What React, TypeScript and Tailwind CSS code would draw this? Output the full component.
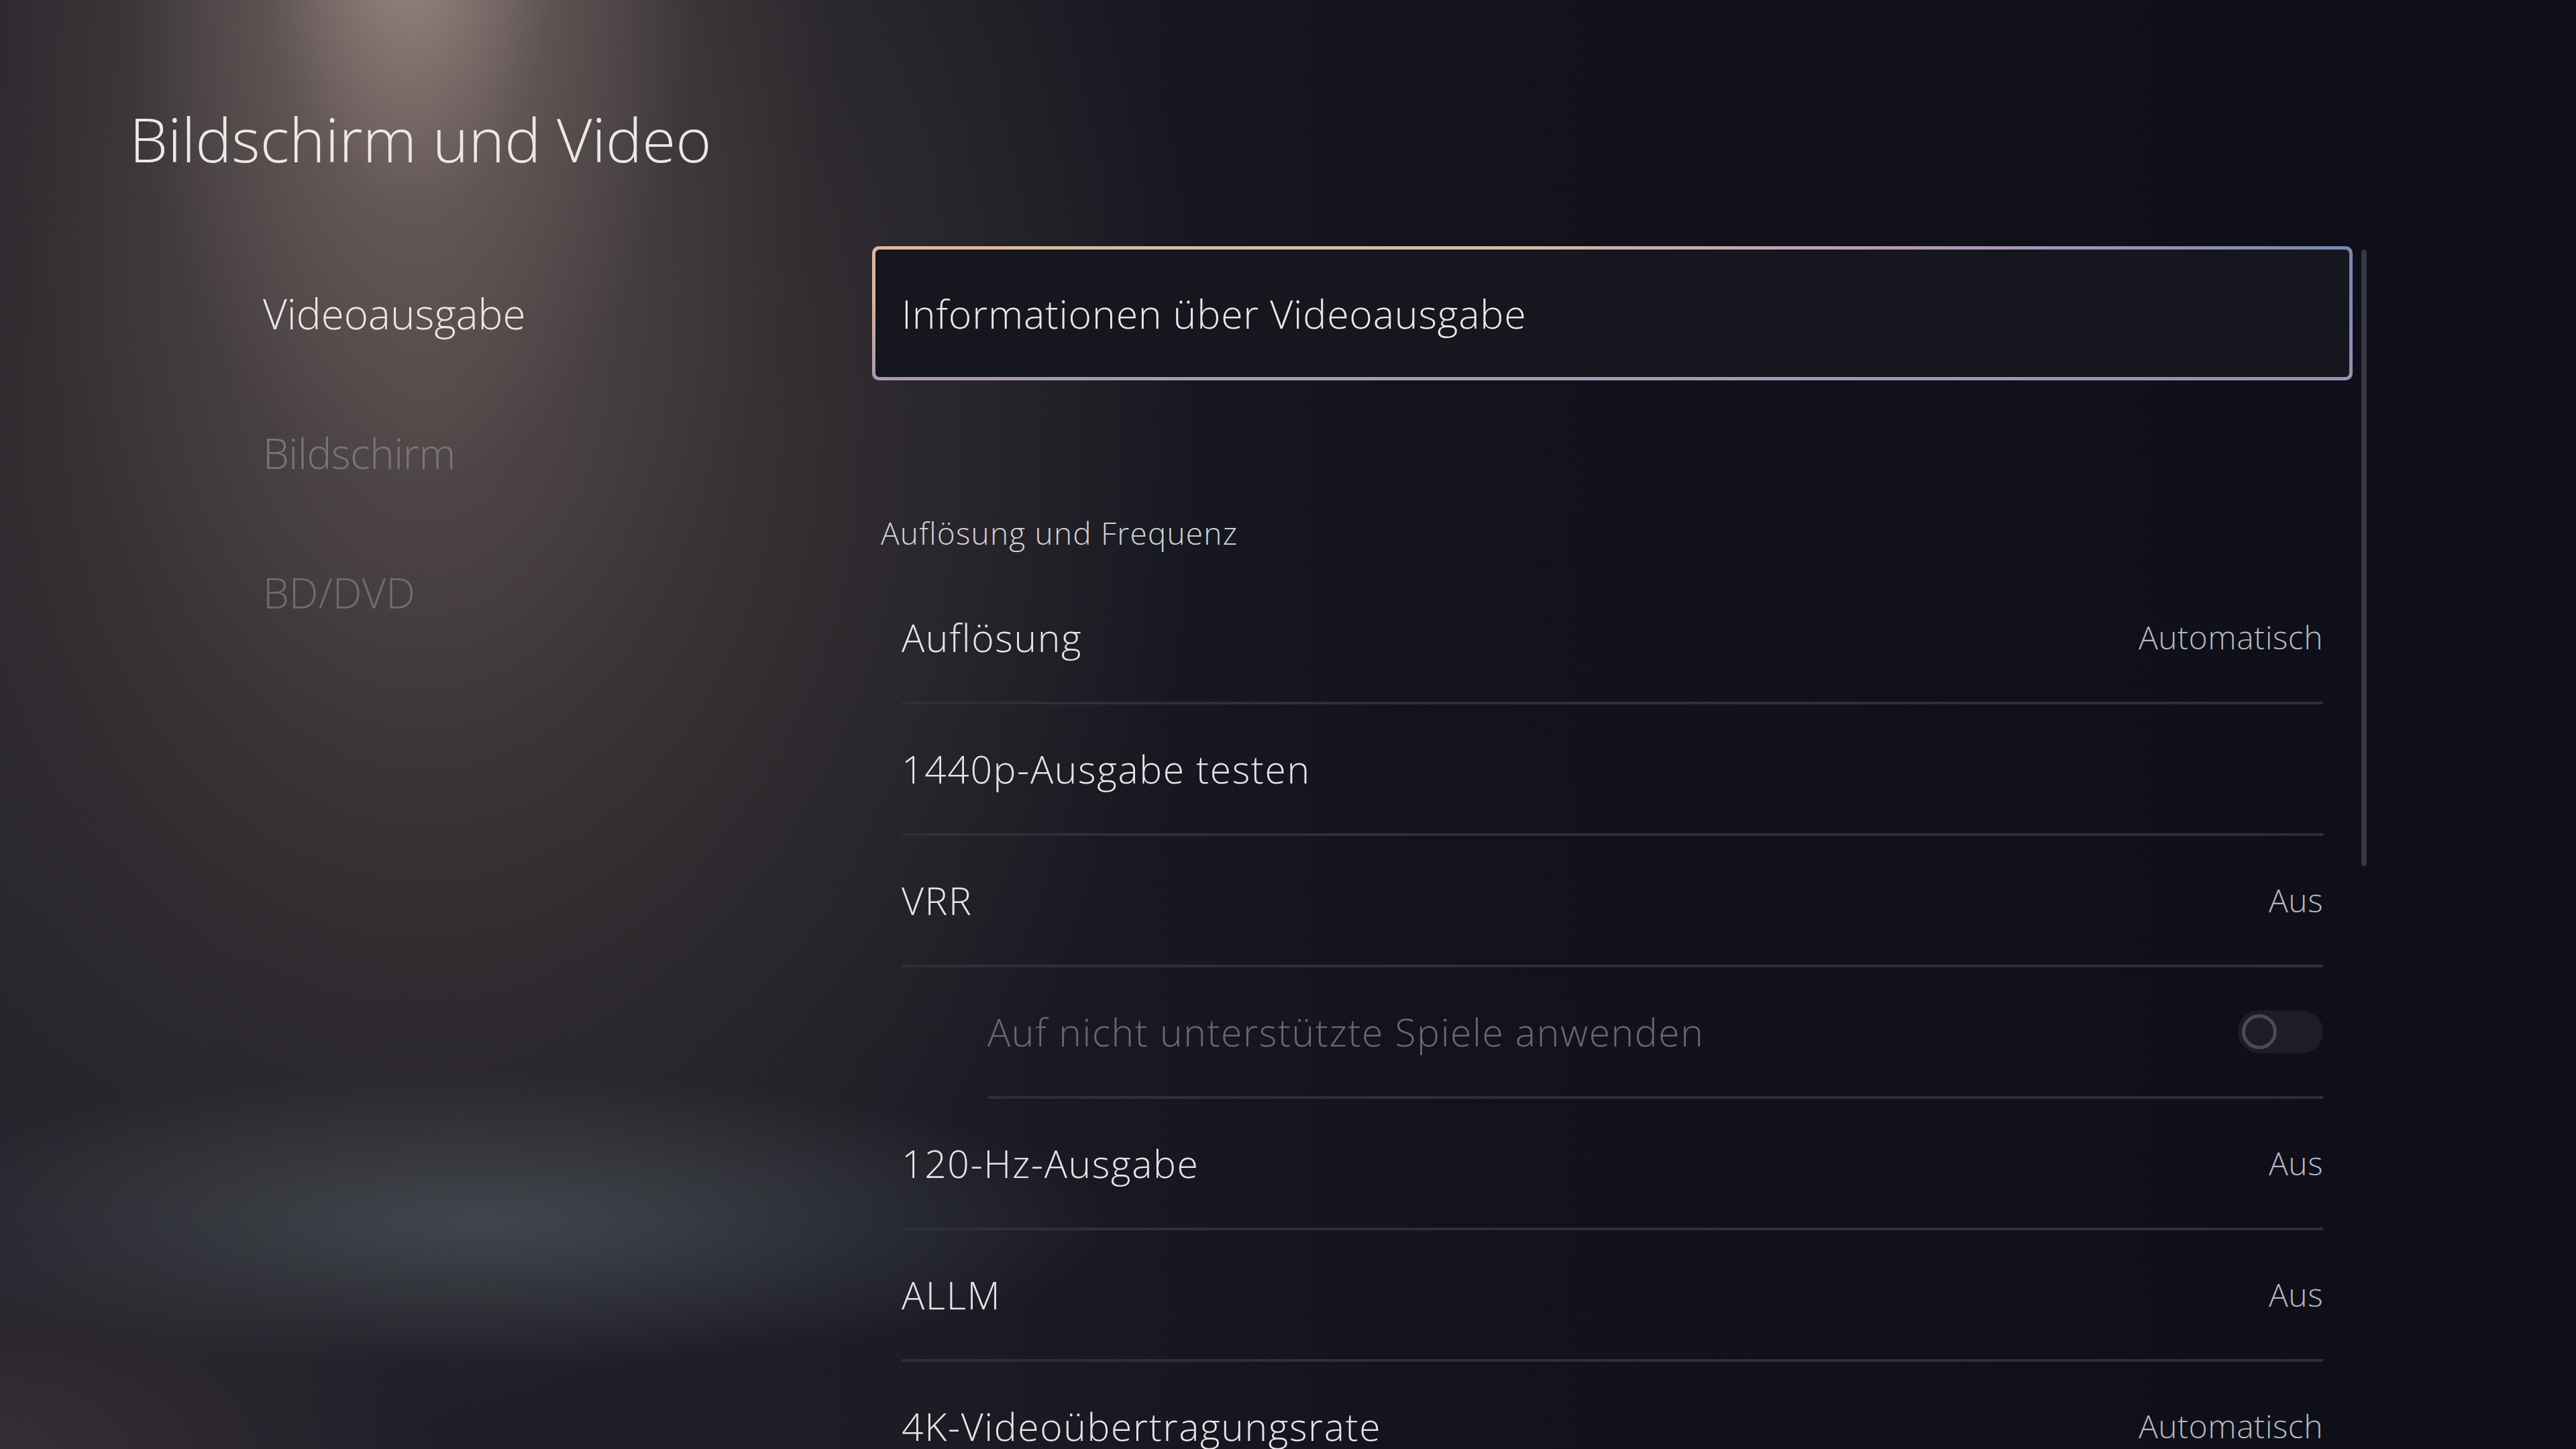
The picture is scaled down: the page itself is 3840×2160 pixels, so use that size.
import React from "react";

const font = "font-['Open_Sans','Noto_Sans',sans-serif]";

function Row({
  label,
  value,
  indent = false,
  dim = false,
  toggle = false,
}: {
  label: string;
  value?: string;
  indent?: boolean;
  dim?: boolean;
  toggle?: boolean;
}) {
  return (
    <div
      className={
        (indent ? "ml-[128px] " : "") +
        "h-[196px] shrink-0 flex items-center justify-between border-b-[4px] border-[#2e2f37]"
      }
    >
      <span
        className={
          "text-[57px] leading-none font-light tracking-[1.6px] " +
          (dim ? "text-[#68686f]" : "text-[#e4e4e8]")
        }
      >
        {label}
      </span>
      {value && (
        <span className="text-[48px] leading-none font-light tracking-[0.5px] text-[#b6b6be]">
          {value}
        </span>
      )}
      {toggle && (
        <div className="w-[127px] h-[64px] rounded-full bg-[#1c1d26] flex items-center pl-[6px]">
          <div className="w-[52px] h-[52px] rounded-full border-[5px] border-[#4a4b53]" />
        </div>
      )}
    </div>
  );
}

export default function App() {
  return (
    <div
      className={
        font +
        " relative w-[3840px] h-[2160px] overflow-hidden flex flex-col " +
        "bg-[radial-gradient(ellipse_640px_1250px_at_610px_-120px,rgba(168,148,140,0.92)_0%,rgba(122,107,104,0.58)_35%,rgba(88,78,78,0.25)_68%,transparent_100%),radial-gradient(ellipse_950px_220px_at_720px_1820px,rgba(72,78,84,0.8)_0%,transparent_100%),radial-gradient(ellipse_650px_320px_at_0px_2160px,rgba(68,54,60,0.6)_0%,transparent_100%),radial-gradient(ellipse_1150px_1500px_at_640px_620px,rgba(77,68,69,1)_0%,rgba(52,47,50,0.78)_55%,transparent_100%),linear-gradient(to_right,#22212a_0%,#1c1c25_35%,#12131c_55%,#0d0e18_100%)]"
      }
    >
      <div className="pt-[162px] pl-[193px] shrink-0">
        <h1 className="text-[91px] leading-none font-light text-[#ece8e6]">
          Bildschirm und Video
        </h1>
      </div>

      <div className="mt-[114px] flex flex-row flex-1 min-h-0">
        {/* Left nav */}
        <div className="w-[1300px] shrink-0 pl-[392px] flex flex-col gap-[8px]">
          <div className="h-[200px] flex items-center text-[62px] leading-none font-light text-[#ebe7e6]">
            Videoausgabe
          </div>
          <div className="h-[200px] flex items-center text-[62px] leading-none font-light tracking-[-0.5px] text-[#7a7676]">
            Bildschirm
          </div>
          <div className="h-[200px] flex items-center text-[62px] leading-none font-light text-[#6f6c6e]">
            BD/DVD
          </div>
        </div>

        {/* Right column */}
        <div className="w-[2207px] shrink-0 flex flex-col">
          <div className="h-[200px] shrink-0 rounded-[10px] p-[5px] bg-[linear-gradient(to_bottom,rgba(165,148,182,0)_35%,rgba(160,145,180,0.85)_100%),linear-gradient(to_right,#dcb99c_0%,#d3bca2_42%,#b89cb3_66%,#7d86b3_100%)]">
            <div className="h-full rounded-[6px] bg-[#15161e] flex items-center pl-[39px]">
              <span className="text-[59px] leading-none font-light tracking-[0.8px] text-[#e8e8ec]">
                Informationen über Videoausgabe
              </span>
            </div>
          </div>

          <div className="mt-[204px] pl-[13px] text-[46px] leading-none font-light tracking-[1.2px] text-[#d2d2d6]">
            Auflösung und Frequenz
          </div>

          <div className="mt-[37px] ml-[44px] w-[2119px] flex flex-col">
            <Row label="Auflösung" value="Automatisch" />
            <Row label="1440p-Ausgabe testen" />
            <Row label="VRR" value="Aus" />
            <Row label="Auf nicht unterstützte Spiele anwenden" indent dim toggle />
            <Row label="120-Hz-Ausgabe" value="Aus" />
            <Row label="ALLM" value="Aus" />
            <Row label="4K-Videoübertragungsrate" value="Automatisch" />
          </div>
        </div>

        {/* Scrollbar */}
        <div className="ml-[13px] mt-[5px] w-[8px] h-[919px] rounded-full bg-[#363741] shrink-0" />
      </div>
    </div>
  );
}
